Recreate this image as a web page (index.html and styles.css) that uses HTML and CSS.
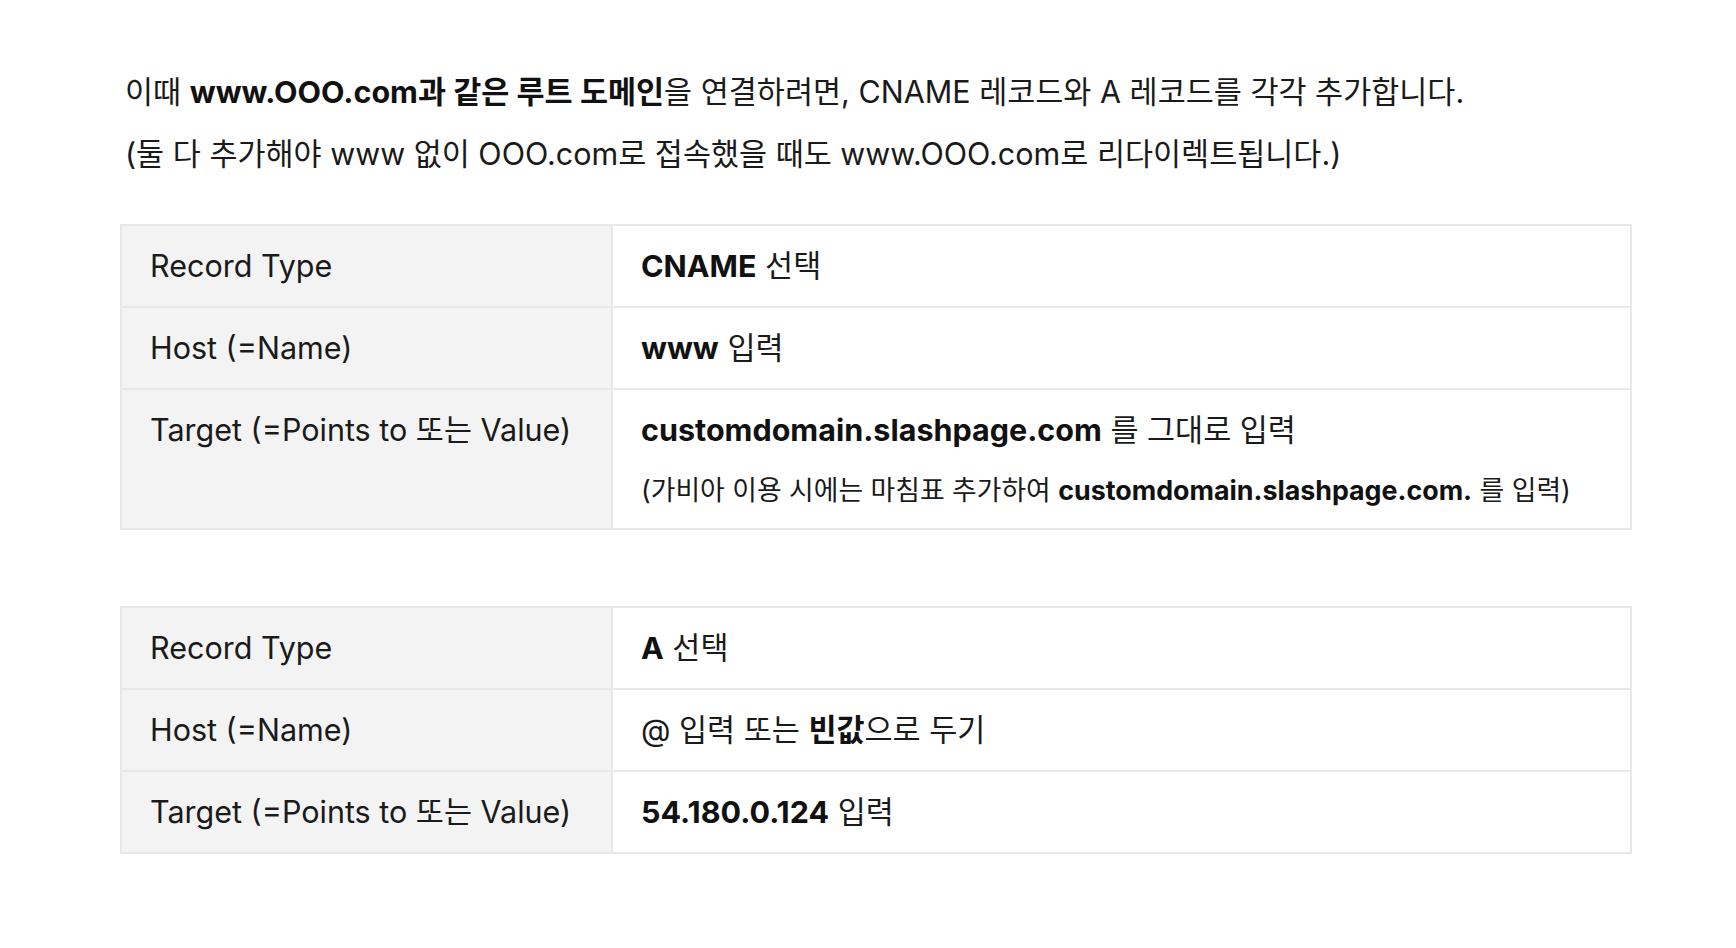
FILE: index.html
```html
<!DOCTYPE html>
<html lang="ko">
<head>
    <meta charset="UTF-8">
    <meta name="viewport" content="width=device-width, initial-scale=1.0">
    <title>커스텀 도메인 연결</title>
    <link rel="stylesheet" href="styles.css">
</head>
<body>

    <div class="page">
        <p class="lead">이때 <strong>www.OOO.com과 같은 루트 도메인</strong>을 연결하려면, CNAME 레코드와 A 레코드를 각각 추가합니다.</p>
        <p class="lead">(둘 다 추가해야 www 없이 OOO.com로 접속했을 때도 www.OOO.com로 리다이렉트됩니다.)</p>

        <table class="dns-table">
            <tr>
                <th>Record Type</th>
                <td><strong>CNAME</strong> 선택</td>
            </tr>
            <tr>
                <th>Host (=Name)</th>
                <td><strong>www</strong> 입력</td>
            </tr>
            <tr>
                <th>Target (=Points to 또는 Value)</th>
                <td>
                    <div><strong>customdomain.slashpage.com</strong> 를 그대로 입력</div>
                    <div class="note">(가비아 이용 시에는 마침표 추가하여 <strong>customdomain.slashpage.com.</strong> 를 입력)</div>
                </td>
            </tr>
        </table>

        <table class="dns-table">
            <tr>
                <th>Record Type</th>
                <td><strong>A</strong> 선택</td>
            </tr>
            <tr>
                <th>Host (=Name)</th>
                <td>@ 입력 또는 <strong>빈값</strong>으로 두기</td>
            </tr>
            <tr>
                <th>Target (=Points to 또는 Value)</th>
                <td><strong>54.180.0.124</strong> 입력</td>
            </tr>
        </table>
    </div>

</body>
</html>
```

FILE: styles.css
```css
body {
    font-family: Inter, "Noto Sans CJK KR", sans-serif;
    background-color: #fff;
    color: #1a1a1a;
    margin: 0;
}

.page {
    width: 1512px;
    padding: 70px 0 0 120px;
}

.lead {
    font-size: 30.5px;
    line-height: 44px;
    margin: 0 0 18px 5px;
}

strong {
    font-weight: 700;
    color: #111;
}

.dns-table {
    width: 100%;
    border-collapse: collapse;
    margin-top: 48px;
    font-size: 30.5px;
    line-height: 44px;
}

.dns-table + .dns-table {
    margin-top: 76px;
}

.dns-table th,
.dns-table td {
    border: 2px solid #e8e8e8;
    padding: 18px 28px;
    text-align: left;
    vertical-align: top;
    font-weight: 400;
}

.dns-table th {
    background-color: #f3f3f3;
    width: 433px;
}

.note {
    font-size: 26.8px;
    line-height: 40px;
    margin-top: 18px;
}
```
